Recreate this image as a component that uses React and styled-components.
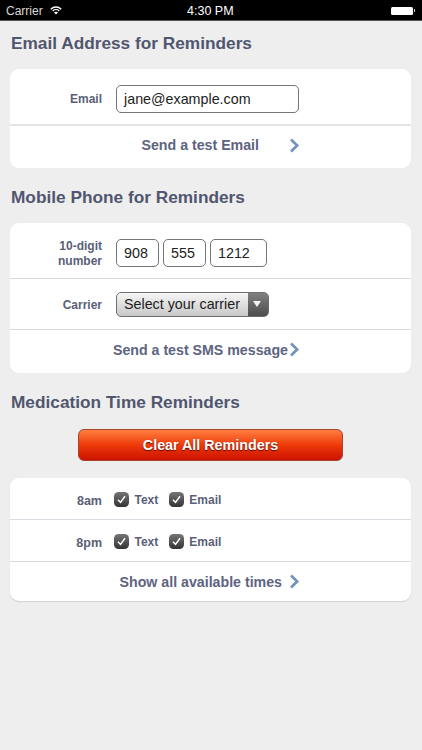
import React from "react"
import styled, { createGlobalStyle } from "styled-components"

const GlobalStyle = createGlobalStyle`
  html, body {
    margin: 0;
    padding: 0;
    background: #eeeeee;
    font-family: "Liberation Sans", Arial, sans-serif;
  }
`

function Wifi() {
  return (
    <svg width="12" height="9" viewBox="0 0 15 11">
      <path d="M1 3.8 C4.6 0.3 10.4 0.3 14 3.8" fill="none" stroke="#fff" strokeWidth="1.7" />
      <path d="M3.4 6 C5.7 3.9 9.3 3.9 11.6 6" fill="none" stroke="#fff" strokeWidth="1.7" />
      <path d="M7.5 10.6 L5 7.9 C6.4 6.8 8.6 6.8 10 7.9 Z" fill="#fff" />
    </svg>
  )
}

function Chevron() {
  return (
    <svg width="11" height="15" viewBox="0 0 11 15">
      <path d="M2 1.5 L8.2 7.5 L2 13.5" fill="none" stroke="#6f93bb" strokeWidth="2.6" />
    </svg>
  )
}

function Checkbox() {
  return (
    <CheckBox>
      <svg width="11" height="11" viewBox="0 0 11 11">
        <path d="M2 5.8 L4.5 8.4 L9 2.2" fill="none" stroke="#fff" strokeWidth="1.5" />
      </svg>
    </CheckBox>
  )
}

function ReminderRow({ time }) {
  return (
    <Row $height={42}>
      <TimeLabel>{time}</TimeLabel>
      <CheckGroup>
        <Checkbox />
        <CheckText>Text</CheckText>
        <Checkbox />
        <CheckText>Email</CheckText>
      </CheckGroup>
    </Row>
  )
}

export default function App() {
  return (
    <Page>
      <GlobalStyle />
      <StatusBar>
        <Carrier>
          Carrier <Wifi />
        </Carrier>
        <Clock>4:30 PM</Clock>
        <Battery>
          <BatteryTip />
        </Battery>
      </StatusBar>

      <Content>
        <Heading>Email Address for Reminders</Heading>
        <Card>
          <Row $height={57} $shift={5} $thick>
            <Label $nudge={2}>Email</Label>
            <TextBox $width={183}>jane@example.com</TextBox>
          </Row>
          <LinkRow $height={42} $gap={30} $lift={4}>
            <span>Send a test Email</span>
            <Chevron />
          </LinkRow>
        </Card>

        <Heading>Mobile Phone for Reminders</Heading>
        <Card>
          <Row $height={56} $shift={5}>
            <Label $nudge={2}>
              10-digit
              <br />
              number
            </Label>
            <PhoneFields>
              <TextBox $width={43}>908</TextBox>
              <TextBox $width={43}>555</TextBox>
              <TextBox $width={57}>1212</TextBox>
            </PhoneFields>
          </Row>
          <Row $height={51}>
            <Label $nudge={4}>Carrier</Label>
            <Select>
              <SelectText>Select your carrier</SelectText>
              <SelectArrow />
            </Select>
          </Row>
          <LinkRow $height={43} $gap={1} $lift={4}>
            <span>Send a test SMS message</span>
            <Chevron />
          </LinkRow>
        </Card>

        <Heading>Medication Time Reminders</Heading>
        <ClearButton>Clear All Reminders</ClearButton>
        <Card $shadow>
          <ReminderRow time="8am" />
          <ReminderRow time="8pm" />
          <LinkRow $height={39} $gap={7}>
            <span>Show all available times</span>
            <Chevron />
          </LinkRow>
        </Card>
      </Content>
    </Page>
  )
}

const Page = styled.div`
  width: 422px;
  height: 750px;
  overflow: hidden;
  background: #eeeeee;
`

const StatusBar = styled.div`
  height: 21px;
  box-sizing: border-box;
  background: #000;
  border-bottom: 1px solid #55585c;
  color: #fff;
  display: flex;
  align-items: center;
  justify-content: space-between;
  position: relative;
  padding: 1px 6px 0;
  font-size: 12px;
`

const Carrier = styled.div`
  display: flex;
  align-items: center;
  gap: 7px;
  color: #d8d8d8;
`

const Clock = styled.div`
  font-size: 12.5px;
  position: absolute;
  left: 187px;
`

const Battery = styled.div`
  width: 22px;
  height: 8px;
  background: #fff;
  border-radius: 1.5px;
  margin-right: 3px;
  position: relative;
`

const BatteryTip = styled.div`
  position: absolute;
  right: -2px;
  top: 2.5px;
  width: 1px;
  height: 3px;
  background: #ccc;
`

const Content = styled.div`
  padding: 0 11px 0 10px;
`

const Heading = styled.h2`
  margin: 0;
  height: 48px;
  padding: 12px 0 0 1px;
  box-sizing: border-box;
  font-size: 17.25px;
  line-height: 20px;
  font-weight: bold;
  color: #51566f;
`

const Card = styled.div`
  background: #fff;
  border-radius: 9px;
  margin-bottom: 7px;
  overflow: hidden;
  box-shadow: ${(props) => (props.$shadow ? "0 1px 1px #cfd2da" : "none")};
`

const Row = styled.div`
  height: ${(props) => props.$height}px;
  box-sizing: border-box;
  padding-top: ${(props) => props.$shift || 0}px;
  display: flex;
  align-items: center;
  border-bottom: ${(props) => (props.$thick ? "2px solid #e4e4e4" : "1px solid #d9dbe3")};
`

const Label = styled.div`
  width: 92px;
  text-align: right;
  margin-right: 14px;
  padding-top: ${(props) => props.$nudge || 0}px;
  font-size: 12px;
  line-height: 15.5px;
  font-weight: bold;
  color: #5a5f78;
`

const TextBox = styled.div`
  width: ${(props) => props.$width}px;
  height: 28px;
  box-sizing: border-box;
  border: 1px solid #73767a;
  border-radius: 5px;
  padding-left: 7px;
  font-size: 14.3px;
  line-height: 26px;
  color: #222;
  background: #fff;
`

const PhoneFields = styled.div`
  display: flex;
  gap: 4px;
`

const Select = styled.div`
  width: 153px;
  height: 25px;
  box-sizing: border-box;
  border: 1px solid #6c6e72;
  border-radius: 5px;
  display: flex;
  overflow: hidden;
  background: linear-gradient(#f6f6f6, #c8c8c8);
`

const SelectText = styled.div`
  flex: 1;
  padding-left: 7px;
  font-size: 14.3px;
  line-height: 23px;
  color: #1c1c1c;
`

const SelectArrow = styled.div`
  width: 20px;
  background: linear-gradient(#808080, #4d4d4d);
  position: relative;
  &::after {
    content: "";
    position: absolute;
    left: 5px;
    top: 8px;
    border-left: 4px solid transparent;
    border-right: 4px solid transparent;
    border-top: 6px solid #f4f4f4;
  }
`

const LinkRow = styled.div`
  height: ${(props) => props.$height}px;
  box-sizing: border-box;
  padding-bottom: ${(props) => props.$lift || 0}px;
  padding-right: 111px;
  display: flex;
  align-items: center;
  justify-content: flex-end;
  gap: ${(props) => props.$gap}px;
  font-size: 14.2px;
  font-weight: bold;
  color: #5d647f;
`

const ClearButton = styled.button`
  display: block;
  width: 265px;
  height: 32px;
  margin: 1px 0 17px 68px;
  padding: 0;
  border: 1px solid #a5452f;
  border-radius: 6px;
  background: linear-gradient(#ff8040, #ee3a0a 50%, #cc1200);
  color: #fff;
  font-family: inherit;
  font-size: 14.3px;
  font-weight: bold;
  text-shadow: 0 1px 1px rgba(60, 0, 0, 0.8);
`

const TimeLabel = styled(Label)`
  font-size: 12.5px;
  margin-right: 12px;
  padding-top: 7px;
`

const CheckGroup = styled.div`
  display: flex;
  align-items: center;
  margin-top: 2px;
`

const CheckBox = styled.div`
  width: 15px;
  height: 15px;
  border-radius: 4.5px;
  background: linear-gradient(#767676, #333);
  display: flex;
  align-items: center;
  justify-content: center;
`

const CheckText = styled.span`
  font-size: 12px;
  font-weight: bold;
  color: #5a5f78;
  margin-left: 5.5px;
  margin-right: 10.5px;
`
